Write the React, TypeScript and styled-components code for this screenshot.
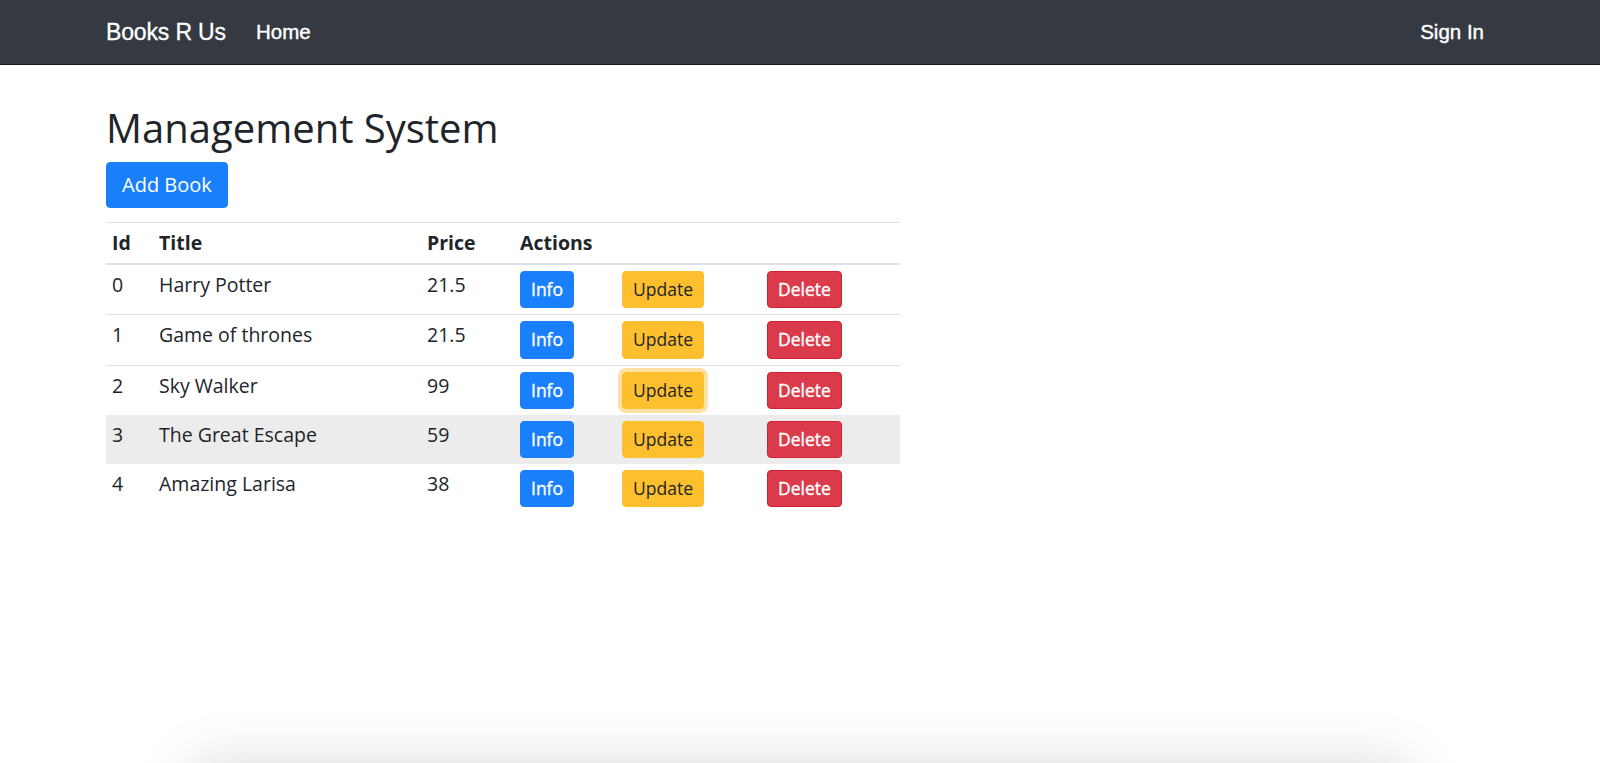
import React from "react";
import styled, { createGlobalStyle, css } from "styled-components";

const GlobalStyle = createGlobalStyle`
  html, body {
    margin: 0;
    padding: 0;
    background: #ffffff;
    overflow: hidden;
  }
  body {
    font-family: "Open Sans", "Noto Sans", sans-serif;
    font-size: 19.5px;
    line-height: 1.5;
    color: #212529;
  }
  * { box-sizing: border-box; }
`;

const NavBar = styled.nav`
  height: 65px;
  background: #353a42;
  border-bottom: 1px solid #15171a;
  display: flex;
  align-items: center;
  padding: 0 106px;
  font-family: "Liberation Sans", Arial, sans-serif;
  color: #ffffff;
`;

const Brand = styled.a`
  font-size: 23px;
  color: #ffffff;
  text-decoration: none;
  margin-right: 20px;
  letter-spacing: -0.15px;
  -webkit-text-stroke: 0.3px #ffffff;
`;

const NavLink = styled.a<{ $push?: boolean }>`
  font-size: 20.5px;
  color: #ffffff;
  text-decoration: none;
  padding: 0 10px;
  -webkit-text-stroke: 0.4px #ffffff;
  ${(p) => p.$push && css`margin-left: auto;`}
`;

const Main = styled.main`
  padding: 38.5px 106px 0;
`;

const Heading = styled.h1`
  margin: 0 0 10.5px;
  font-size: 40px;
  line-height: 48px;
  font-weight: 400;
  color: #212529;
`;

const Button = styled.button<{ $variant: "primary" | "warning" | "danger"; $size?: "sm"; $focus?: boolean }>`
  display: inline-block;
  font-family: "Open Sans", "Noto Sans", sans-serif;
  border-radius: 4px;
  border: 1px solid transparent;
  cursor: pointer;
  vertical-align: top;
  font-size: 20px;
  line-height: 30px;
  padding: 7px 15px;
  ${(p) =>
    p.$size === "sm" &&
    css`
      font-size: 17.5px;
      line-height: 25.3px;
      padding: 5px 10px;
    `}
  ${(p) =>
    p.$variant === "primary" &&
    css`
      background: #1a7ffa;
      border-color: #1a7ffa;
      color: #ffffff;
    `}
  ${(p) =>
    p.$variant === "warning" &&
    css`
      background: #febf2e;
      border-color: #febf2e;
      color: #212529;
    `}
  ${(p) =>
    p.$variant === "danger" &&
    css`
      background: #da3a4a;
      border-color: #d0212f;
      color: #ffffff;
    `}
  ${(p) =>
    p.$size === "sm" &&
    p.$variant !== "warning" &&
    css`
      -webkit-text-stroke: 0.35px #ffffff;
    `}
  ${(p) =>
    p.$focus &&
    css`
      box-shadow: 0 0 0 4px rgba(254, 205, 100, 0.6);
    `}
`;

const Table = styled.table`
  margin-top: 14px;
  width: 794px;
  border-collapse: collapse;
  table-layout: fixed;
  border-top: 1px solid #dee2e6;
`;

const HeadCell = styled.th`
  text-align: left;
  font-weight: 700;
  vertical-align: bottom;
  padding: 6px;
  line-height: 28px;
  border-bottom: 2px solid #dee2e6;
  white-space: nowrap;
`;

const Row = styled.tr<{ $hover?: boolean }>`
  background: ${(p) => (p.$hover ? "#ececec" : "transparent")};
  & + & > td {
    border-top: 1px solid #dee2e6;
  }
`;

const Cell = styled.td`
  padding: 6px;
  line-height: 28px;
  vertical-align: top;
  white-space: nowrap;
`;

const BottomShadow = styled.div`
  position: fixed;
  left: 192px;
  right: 192px;
  bottom: -120px;
  height: 120px;
  box-shadow: 0 0 55px rgba(0, 0, 0, 0.15);
  background: #ffffff;
`;

const books = [
  { id: 0, title: "Harry Potter", price: "21.5" },
  { id: 1, title: "Game of thrones", price: "21.5" },
  { id: 2, title: "Sky Walker", price: "99" },
  { id: 3, title: "The Great Escape", price: "59" },
  { id: 4, title: "Amazing Larisa", price: "38" },
];

export default function App() {
  return (
    <>
      <GlobalStyle />
      <NavBar>
        <Brand href="#">Books R Us</Brand>
        <NavLink href="#">Home</NavLink>
        <NavLink href="#" $push>Sign In</NavLink>
      </NavBar>
      <Main>
        <Heading>Management System</Heading>
        <Button $variant="primary">Add Book</Button>
        <Table>
          <colgroup>
            <col style={{ width: 47 }} />
            <col style={{ width: 268 }} />
            <col style={{ width: 93 }} />
            <col style={{ width: 102 }} />
            <col style={{ width: 145 }} />
            <col style={{ width: 139 }} />
          </colgroup>
          <thead>
            <tr>
              <HeadCell>Id</HeadCell>
              <HeadCell>Title</HeadCell>
              <HeadCell>Price</HeadCell>
              <HeadCell colSpan={3}>Actions</HeadCell>
            </tr>
          </thead>
          <tbody>
            {books.map((b) => (
              <Row key={b.id} $hover={b.id === 3}>
                <Cell>{b.id}</Cell>
                <Cell>{b.title}</Cell>
                <Cell>{b.price}</Cell>
                <Cell>
                  <Button $variant="primary" $size="sm">Info</Button>
                </Cell>
                <Cell>
                  <Button $variant="warning" $size="sm" $focus={b.id === 2}>Update</Button>
                </Cell>
                <Cell>
                  <Button $variant="danger" $size="sm">Delete</Button>
                </Cell>
              </Row>
            ))}
          </tbody>
        </Table>
      </Main>
      <BottomShadow />
    </>
  );
}
